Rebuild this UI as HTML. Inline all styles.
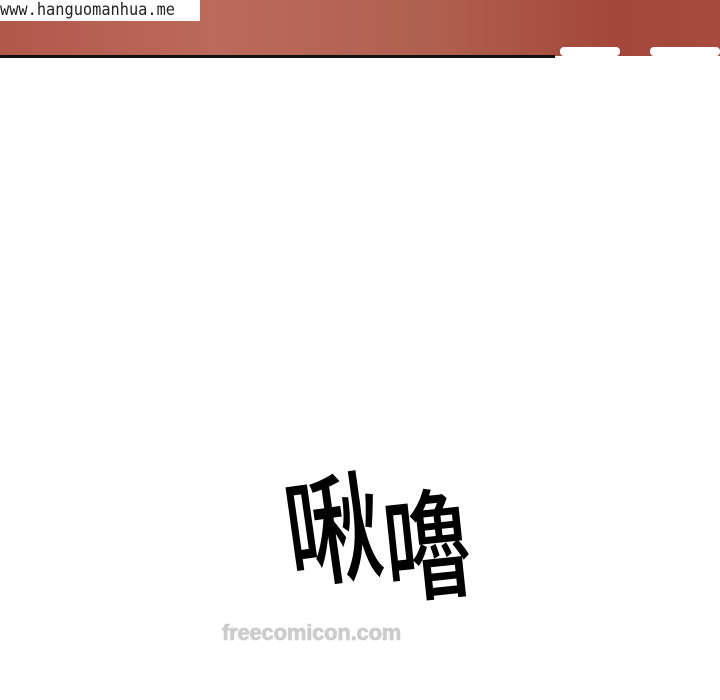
<!DOCTYPE html>
<html><head><meta charset="utf-8"><style>
body{margin:0;width:720px;height:700px;background:#fff;position:relative;overflow:hidden}
.ban{position:absolute;left:0;top:0;width:720px;height:56px;background:linear-gradient(90deg,#b2584b 0%,#bb6a5c 30%,#b0604f 60%,#a4473a 85%,#a84a3e 100%)}
.line{position:absolute;left:0;top:55px;width:555px;height:3px;background:#111}
.blob{position:absolute;top:47px;height:9px;background:#fff;border-radius:4px}
.wm{position:absolute;left:0;top:0;width:200px;height:21px;background:#fff;font:17px "DejaVu Sans Mono","Liberation Mono",monospace;line-height:21px;color:#222;white-space:nowrap;overflow:hidden}
.wm span{display:inline-block;transform:scaleX(0.9);transform-origin:0 0}
.c{position:absolute;font-family:"Noto Sans CJK SC",sans-serif;font-weight:500;color:#000;font-size:120px;line-height:1}
.f{position:absolute;left:222px;top:620px;font:bold 22px "Liberation Sans",sans-serif;color:#ccc;letter-spacing:-0.2px;text-shadow:0 0 1px #999}
</style></head><body>
<div class="ban"></div><div class="line"></div>
<div class="blob" style="left:560px;width:60px"></div>
<div class="blob" style="left:650px;width:70px"></div>
<div class="wm"><span>www.hanguomanhua.me</span></div>
<div class="c" style="left:272px;top:462px;transform:rotate(-8deg) scaleX(0.8)">啾</div>
<div class="c" style="left:366px;top:478px;transform:rotate(-6deg) scaleX(0.72)">嚕</div>
<div class="f">freecomicon.com</div>
</body></html>
